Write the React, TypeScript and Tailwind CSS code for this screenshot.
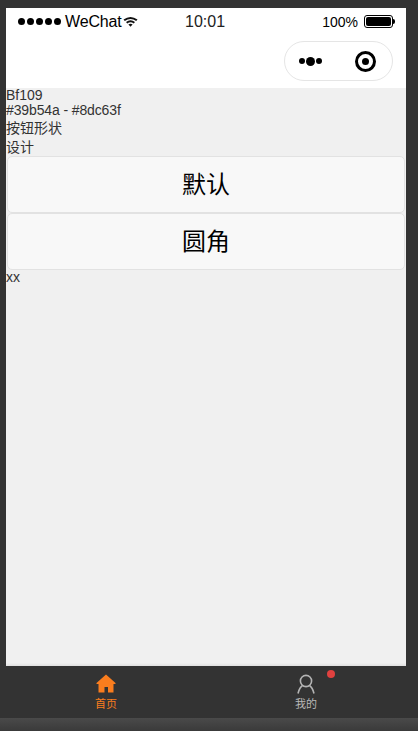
const cjk = "font-['Liberation_Sans','Noto_Sans_CJK_SC',sans-serif]";

const Wifi = () => (
  <svg width="15" height="11" viewBox="0 0 15 11" className="ml-[1px]">
    <path d="M0.5 3.5 Q7.5 -1.5 14.5 3.5 L13.2 5 Q7.5 1 1.8 5 Z" fill="#111" />
    <path d="M3 6 Q7.5 2.6 12 6 L10.7 7.4 Q7.5 5.2 4.3 7.4 Z" fill="#111" />
    <path d="M5.4 8.4 Q7.5 7 9.6 8.4 L7.5 10.8 Z" fill="#111" />
  </svg>
);

const StatusBar = () => (
  <div className="relative flex h-[26px] items-center justify-between pl-3 pr-[11px] pt-[1px] text-black">
    <div className="flex items-center">
      <div className="flex gap-[2px]">
        {[0, 1, 2, 3, 4].map((i) => (
          <span key={i} className="h-[7px] w-[7px] rounded-full bg-black" />
        ))}
      </div>
      <span className="ml-[4px] text-[16px] leading-[20px] tracking-[-0.15px]">WeChat</span>
      <Wifi />
    </div>
    <span className="absolute left-[179px] top-[4px] text-[16px] leading-[20px] text-[#222]">10:01</span>
    <div className="flex items-center">
      <span className="text-[14px] leading-[20px]">100%</span>
      <div className="ml-[6px] flex h-[13px] w-[29px] items-center rounded-[3px] border border-black p-[1px]">
        <div className="h-full w-full rounded-[2px] bg-black" />
      </div>
      <div className="h-[5px] w-[2px] rounded-r-full bg-black" />
    </div>
  </div>
);

const NavBar = () => (
  <div className="flex h-[54px] justify-end pr-[13px] pt-[7px]">
    <div className="flex h-[40px] w-[109px] items-center rounded-full border border-[#e5e5e5] bg-white pl-[14px]">
      <div className="flex items-center gap-[1px]">
        <span className="h-[6px] w-[6px] rounded-full bg-black" />
        <span className="h-[9px] w-[9px] rounded-full bg-black" />
        <span className="h-[6px] w-[6px] rounded-full bg-black" />
      </div>
      <div className="ml-[33px] flex h-[21px] w-[21px] items-center justify-center rounded-full border-[3px] border-black">
        <span className="h-[7px] w-[7px] rounded-full bg-black" />
      </div>
    </div>
  </div>
);

const ShapeButton = ({ label }: { label: string }) => (
  <button className="mx-[1px] flex h-[57px] w-[398px] items-center justify-center rounded-[5px] border border-[#e2e2e2] bg-[#f8f8f8] text-[24px] text-black">
    {label}
  </button>
);

const TabBar = () => (
  <div className="flex h-[52px] bg-[#333333]">
    <div className="flex w-1/2 flex-col items-center pt-[8px]">
      <svg width="20" height="19" viewBox="0 0 20 19">
        <path
          d="M10 0.5 L19.5 9 V10 H17.5 V18.5 H12 V13 H8.5 V18.5 H2.5 V10 H0.5 V9 Z"
          fill="#fa7d1e"
        />
      </svg>
      <span className="mt-[4px] text-[11px] leading-[14px] text-[#fa7d1e]">首页</span>
    </div>
    <div className="relative flex w-1/2 flex-col items-center pt-[8px]">
      <svg width="20" height="20" viewBox="0 0 20 20" fill="none" stroke="#b4b4b4" strokeWidth="1.6">
        <circle cx="10" cy="7" r="5.6" />
        <path d="M2 19.5 Q3.5 13.5 6.4 11.8 M18 19.5 Q16.5 13.5 13.6 11.8" />
      </svg>
      <span className="mt-[3px] text-[11px] leading-[14px] text-[#b9b9b9]">我的</span>
      <span className="absolute left-[121px] top-[4px] h-[8px] w-[8px] rounded-full bg-[#e0413f]" />
    </div>
  </div>
);

export default function App() {
  return (
    <div className={`flex h-[731px] w-[418px] flex-col overflow-hidden bg-[#333333] px-[6px] pt-2 ${cjk}`}>
      <div className="flex h-[710px] w-[400px] flex-col bg-white">
        <StatusBar />
        <NavBar />
        <main className="flex flex-1 flex-col bg-[#f0f0f0] text-[14px] text-[#333333]">
          <div className="leading-[15px]">Bf109</div>
          <div className="leading-[15px] tracking-[-0.12px]">#39b54a - #8dc63f</div>
          <div className="leading-[20px]">按钮形状</div>
          <div className="leading-[18px]">设计</div>
          <ShapeButton label="默认" />
          <ShapeButton label="圆角" />
          <div className="leading-[15px]">xx</div>
          <div className="mt-auto h-[3px] bg-gradient-to-b from-[#f0f0f0] to-[#e0e0e0]" />
        </main>
        <TabBar />
      </div>
      <div className="mx-[-6px] flex-1 bg-gradient-to-b from-[#4a4a4a] to-[#3a3a3a]" />
    </div>
  );
}
